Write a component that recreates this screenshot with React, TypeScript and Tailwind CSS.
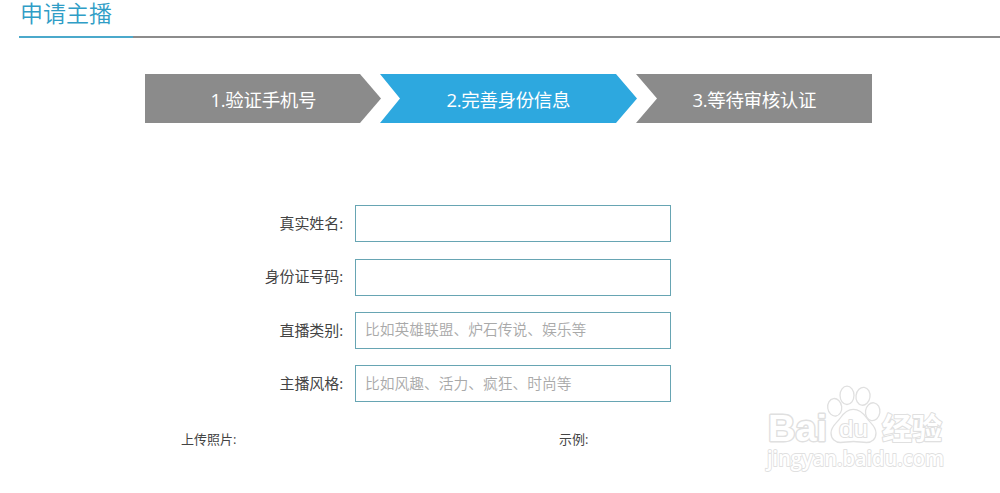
import React from 'react';
import clsx from 'clsx';

interface Step {
  label: string;
  points: string;
  width: number;
  textX: number;
  textLength: number;
  active?: boolean;
}

interface Field {
  name: string;
  label: string;
  placeholder?: string;
}

const steps: Step[] = [
  { label: '1.验证手机号', points: '0,0 215,0 236,24.5 215,49 0,49', width: 236, textX: 65.5, textLength: 106 },
  { label: '2.完善身份信息', points: '0,0 236,0 257,24.5 236,49 0,49 20,24.5', width: 257, textX: 66.5, textLength: 124, active: true },
  { label: '3.等待审核认证', points: '0,0 236,0 236,49 0,49 21,24.5', width: 236, textX: 56.5, textLength: 124 },
];

const fields: Field[] = [
  { name: 'realName', label: '真实姓名:' },
  { name: 'idNumber', label: '身份证号码:' },
  { name: 'category', label: '直播类别:', placeholder: '比如英雄联盟、炉石传说、娱乐等' },
  { name: 'style', label: '主播风格:', placeholder: '比如风趣、活力、疯狂、时尚等' },
];

const StepArrow: React.FC<{ step: Step }> = ({ step }) => (
  <svg
    width={step.width}
    height={49}
    className={clsx('shrink-0', step.active ? 'text-[#2da8df]' : 'text-[#8b8b8b]')}
  >
    <polygon points={step.points} fill="currentColor" />
    <text x={step.textX} y={32.5} textLength={step.textLength} className="fill-white text-[18.5px]">
      {step.label}
    </text>
  </svg>
);

const FormRow: React.FC<{ field: Field }> = ({ field }) => (
  <div className="flex h-[37px] items-center">
    <label htmlFor={field.name} className="w-[343px] pb-px text-right text-[15px] tracking-[-0.1px] text-[#444]">
      {field.label}
    </label>
    <input
      id={field.name}
      type="text"
      placeholder={field.placeholder}
      className="ml-3 h-[37px] w-[316px] border border-[#67a5b3] bg-white pb-0.5 pl-[9px] text-[14.75px] font-[350] outline-none placeholder:text-[#a9a9a9]"
    />
  </div>
);

const Watermark = () => (
  <svg
    width="190"
    height="100"
    viewBox="0 0 190 100"
    className="pointer-events-none absolute top-[380px] left-[762px] fill-white stroke-[#e0e0e0]"
    strokeWidth="1.3"
    strokeLinejoin="round"
  >
    <ellipse cx="72.7" cy="27.3" rx="7" ry="8.8" transform="rotate(-8 72.7 27.3)" />
    <ellipse cx="85" cy="15.3" rx="7" ry="9.2" />
    <ellipse cx="101" cy="16.3" rx="7" ry="9" transform="rotate(8 101 16.3)" />
    <ellipse cx="110.7" cy="31.7" rx="7.2" ry="9" transform="rotate(8 110.7 31.7)" />
    <path d="M91.3 29.3c-6 0-9.8 4-13 8.7-3.3 5-9.3 8-9.3 15 0 6 4.5 9.500 9.500 9.500 4.500 0 8-1 13-1s8.500 1 13 1c5.500 0 9.500-3.500 9.500-9.500 0-7-6-10-9.300-15-3.200-4.700-7.400-8.700-13.400-8.700Z" />
    <g className="font-['Liberation_Sans',sans-serif]">
      <text x="6" y="60.5" textLength="59" lengthAdjust="spacingAndGlyphs" fontSize="37" strokeWidth="2.8" paintOrder="stroke" className="font-bold">Bai</text>
      <text x="77" y="56.5" textLength="29" lengthAdjust="spacingAndGlyphs" fontSize="24" strokeWidth="2" paintOrder="stroke">du</text>
    </g>
    <text x="120" y="58.5" textLength="60" lengthAdjust="spacingAndGlyphs" fontSize="30" strokeWidth="2.2" paintOrder="stroke" className="font-bold">经验</text>
    <text x="5" y="86" textLength="177" lengthAdjust="spacingAndGlyphs" fontSize="21" strokeWidth="1.8" paintOrder="stroke" className="font-semibold">
      jingyan.baidu.com
    </text>
  </svg>
);

const App: React.FC = () => {
  return (
    <div className="relative h-[493px] w-[1000px] overflow-hidden bg-white font-['Open_Sans','Noto_Sans_CJK_SC',sans-serif]">
      <header className="ml-[19px] flex h-[38px] border-b-2 border-[#8c8c8c]">
        <h1 className="-mb-0.5 h-[38px] w-[114px] border-b-2 border-[#4ba9cb] pl-px text-[23px] leading-[27px] font-[350] whitespace-nowrap text-[#2f9dc6]">
          申请主播
        </h1>
      </header>

      <div className="mt-9 ml-[145.4px] flex -space-x-px">
        {steps.map((step) => (
          <StepArrow key={step.label} step={step} />
        ))}
      </div>

      <form className="mt-[82.3px] flex flex-col gap-[16.33px]">
        {fields.map((field) => (
          <FormRow key={field.name} field={field} />
        ))}
      </form>

      <div className="mt-[27px] ml-[181px] flex text-[13px] leading-5 text-[#444]">
        <span className="w-[378px]">上传照片:</span>
        <span>示例:</span>
      </div>

      <Watermark />
    </div>
  );
};

export default App;
